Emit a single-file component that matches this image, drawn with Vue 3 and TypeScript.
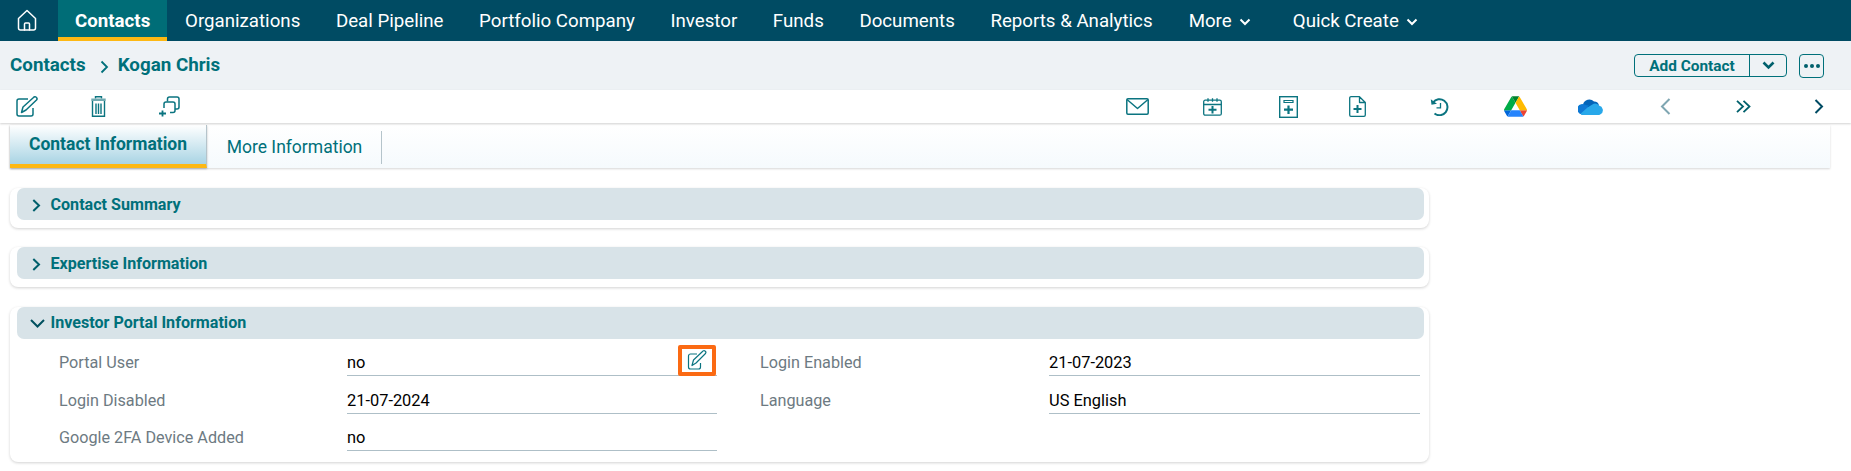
<script setup lang="ts">
const navItems: string[] = ['Organizations', 'Deal Pipeline', 'Portfolio Company', 'Investor', 'Funds', 'Documents', 'Reports & Analytics']
const collapsed: string[] = ['Contact Summary', 'Expertise Information']
</script>

<template>
  <div class="page">
    <nav class="nav">
      <a class="home" aria-label="Home">
        <svg width="20" height="22" viewBox="0 0 20 22" fill="none" stroke="#fff" stroke-width="1.5" stroke-linejoin="round" stroke-linecap="round">
          <path d="M1.5 9.5 10 1.5l8.500 8v9.500a2 2 0 0 1-2 2h-13a2 2 0 0 1-2-2z" />
          <path d="M7.500 21v-6a1 1 0 0 1 1-1h3a1 1 0 0 1 1 1v6" />
        </svg>
      </a>
      <a class="nav-item active">Contacts</a>
      <a v-for="item in navItems" :key="item" class="nav-item">{{ item }}</a>
      <a class="nav-item caret-item more">More
        <svg class="caret" width="12" height="8" viewBox="0 0 12 8" fill="none" stroke="#fff" stroke-width="2"><path d="M1.500 1.500 6 6l4.500-4.500" /></svg>
      </a>
      <a class="nav-item caret-item quick">Quick Create
        <svg class="caret" width="12" height="8" viewBox="0 0 12 8" fill="none" stroke="#fff" stroke-width="2"><path d="M1.500 1.500 6 6l4.500-4.500" /></svg>
      </a>
    </nav>

    <header class="crumbs">
      <span class="crumb">Contacts</span>
      <svg class="crumb-sep" width="9" height="14" viewBox="0 0 9 14" fill="none" stroke="#00707a" stroke-width="1.800"><path d="m1.500 1.500 5.500 5.500-5.500 5.500" /></svg>
      <span class="crumb">Kogan Chris</span>
      <div class="crumb-actions">
        <div class="split">
          <button class="split-main">Add Contact</button>
          <button class="split-caret" aria-label="Open">
            <svg width="13" height="9" viewBox="0 0 13 9" fill="none" stroke="#00606c" stroke-width="2.600"><path d="m1.500 1.500 5 5 5-5" /></svg>
          </button>
        </div>
        <button class="dots" aria-label="More actions"><i></i><i></i><i></i></button>
      </div>
    </header>

    <div class="toolbar">
      <svg class="t-edit" width="22" height="21" viewBox="0 0 22 21" fill="none" stroke="#0b7480" stroke-width="1.500" stroke-linejoin="round">
        <path d="M12 3H3a2 2 0 0 0-2 2v13a2 2 0 0 0 2 2h12a2 2 0 0 0 2-2v-6" />
        <path d="M5.500 16.500 7 11 17.500 1.500a1.600 1.600 0 0 1 3 2.500L10 14z" />
      </svg>
      <svg class="t-trash" width="15" height="21" viewBox="0 0 15 21" fill="none" stroke="#0b7480" stroke-width="1.400">
        <path d="M4.500 2.500V.7h6v1.800" />
        <path d="M.3 2.500h14.400v2.500H.3z" fill="#6fa9b0" stroke="none" />
        <path d="M1.500 5v15.300h12V5M5 7.500v10.500M7.500 7.500v10.500M10 7.500v10.500" />
      </svg>
      <svg class="t-copy" width="22" height="21" viewBox="0 0 22 21" fill="none" stroke="#0b7480" stroke-width="1.500">
        <path d="M9.500 5.500V3a2 2 0 0 1 2-2H19a2 2 0 0 1 2 2v8a2 2 0 0 1-2 2h-2" />
        <path d="M17 8a2 2 0 0 0-2-2H8a2 2 0 0 0-2 2v4M12 16.500h3a2 2 0 0 0 2-2V8" />
        <path d="M4.500 14.500v6M1 17.500h7" stroke-width="1.800" />
      </svg>
      <svg class="t-mail" width="23" height="17" viewBox="0 0 23 17" fill="none" stroke="#0b7480" stroke-width="1.500" stroke-linejoin="round">
        <rect x=".8" y=".8" width="21.400" height="15.400" rx="1.200" />
        <path d="m1 1.500 10.500 9 10.500-9" />
      </svg>
      <svg class="t-cal" width="19" height="18" viewBox="0 0 19 18" fill="none" stroke="#0b7480" stroke-width="1.300">
        <rect x=".7" y="2.200" width="17.600" height="15" rx="1.500" />
        <path d="M.7 6.500h17.600M5 .3v3.500M9.500.3v3.500M14 .3v3.500" />
        <path d="M9.500 8v7.500M5.500 11.700h8" stroke-width="2" />
      </svg>
      <svg class="t-doc" width="19" height="22" viewBox="0 0 19 22" fill="none" stroke="#0b7480" stroke-width="1.400">
        <rect x=".7" y=".7" width="17.600" height="20.600" />
        <path d="M5 4.500h9v2H5z" stroke-width="1.200" />
        <path d="M9.500 9.500v8.500M5 13.700h9" stroke-width="2.200" />
      </svg>
      <svg class="t-file" width="17" height="21" viewBox="0 0 17 21" fill="none" stroke="#0b7480" stroke-width="1.300" stroke-linejoin="round">
        <path d="M10.500.7H2A1.300 1.300 0 0 0 .7 2v17A1.300 1.300 0 0 0 2 20.300h13a1.300 1.300 0 0 0 1.300-1.300V6.500zM10.500.7v5.800h5.800" />
        <path d="M8.500 9v8M4.500 13h8" stroke-width="2" />
      </svg>
      <svg class="t-hist" width="19" height="18" viewBox="0 0 19 18" fill="none" stroke="#0b7480" stroke-width="2">
        <path d="M3 4.500A8 8 0 1 1 4.500 15.500" />
        <path d="M.8 1.200 1.500 6.800 7 5.800z" fill="#0b7480" stroke="none" />
        <path d="M10.500 5v4.800H6.500" stroke-width="1.300" />
      </svg>
      <svg class="t-drive" width="23" height="21" viewBox="0 0 87.300 78">
        <path d="m6.600 66.850 3.850 6.650c.8 1.400 1.950 2.500 3.300 3.300l13.750-23.800h-27.500c0 1.550.4 3.100 1.200 4.500z" fill="#0066da" />
        <path d="m43.650 25-13.750-23.800c-1.350.8-2.500 1.900-3.300 3.300l-25.400 44a9.060 9.060 0 0 0-1.200 4.500h27.500z" fill="#00ac47" />
        <path d="m73.550 76.800c1.350-.8 2.500-1.900 3.300-3.300l1.600-2.750 7.650-13.250c.8-1.400 1.200-2.950 1.200-4.500h-27.502l5.852 11.500z" fill="#ea4335" />
        <path d="m43.650 25 13.750-23.800c-1.350-.8-2.900-1.200-4.500-1.200h-18.500c-1.600 0-3.150.45-4.500 1.200z" fill="#00832d" />
        <path d="m59.800 53h-32.300l-13.750 23.800c1.350.8 2.900 1.200 4.500 1.200h50.800c1.600 0 3.150-.45 4.500-1.200z" fill="#2684fc" />
        <path d="m73.400 26.500-12.700-22c-.8-1.400-1.950-2.500-3.300-3.300l-13.750 23.800 16.150 28h27.450c0-1.550-.4-3.100-1.200-4.500z" fill="#ffba00" />
      </svg>
      <svg class="t-cloud" width="25" height="17" viewBox="0 0 25 17">
        <path d="M5 6.500A6.500 6.500 0 0 1 16 3.500a5 5 0 0 1 5 4l-9 4z" fill="#0364b8" />
        <path d="M5.500 6.300A4.500 4.500 0 0 0 3 16l8-8.500z" fill="#0078d4" />
        <path d="M2.500 15.900C1 15.200 0 13.500 0 11.500a5 5 0 0 1 5.500-5.200L12 10l4 7H4.500z" fill="#0f78d4" />
        <path d="M9.500 9.500 14 6.800a5.200 5.200 0 0 1 7 .8 4.700 4.700 0 0 1 1.800 8.500c-.5.500-1.200.9-2 .9H5a3 3 0 0 1-2.500-1.200z" fill="#28a8ea" />
      </svg>
      <svg class="t-prev" width="11" height="17" viewBox="0 0 11 17" fill="none" stroke="#7fa6b2" stroke-width="2"><path d="M9.500 1 2 8.500 9.500 16" /></svg>
      <svg class="t-double" width="15" height="13" viewBox="0 0 15 13" fill="none" stroke="#00606c" stroke-width="1.800"><path d="m1 .8 6 5.700-6 5.700M7.500.8l6 5.700-6 5.700" /></svg>
      <svg class="t-next" width="10" height="15" viewBox="0 0 10 15" fill="none" stroke="#004b63" stroke-width="2"><path d="m1.500 1 6.500 6.500L1.500 14" /></svg>
    </div>

    <div class="tabs">
      <a class="tab tab-active">Contact Information</a>
      <a class="tab tab-plain">More Information</a>
    </div>

    <main class="content">
      <section v-for="title in collapsed" :key="title" class="panel">
        <h2 class="panel-head">
          <svg class="chev-right" width="9" height="13" viewBox="0 0 9 13" fill="none" stroke="#00606c" stroke-width="2"><path d="m1.300 1 5.700 5.500-5.700 5.500" /></svg>
          <span>{{ title }}</span>
        </h2>
      </section>

      <section class="panel">
        <h2 class="panel-head">
          <svg class="chev-down" width="15" height="10" viewBox="0 0 15 10" fill="none" stroke="#00505f" stroke-width="2"><path d="m1 1 6.500 6.500 6.500-6.500" /></svg>
          <span>Investor Portal Information</span>
        </h2>
        <div class="form">
          <div class="label">Portal User</div>
          <div class="value">no
            <span class="edit-box">
              <svg width="20" height="21" viewBox="0 0 20 21" fill="none" stroke="#0b7480" stroke-width="1.200" stroke-linejoin="round">
                <path d="M10 4H3.500a2 2 0 0 0-2 2v11a2 2 0 0 0 2 2h8a2 2 0 0 0 2-2v-4" />
                <path d="M5 15.500 6.500 10 15.500 1.500a1.500 1.500 0 0 1 3 2L9 13z" />
              </svg>
            </span>
          </div>
          <div class="label second">Login Enabled</div>
          <div class="value">21-07-2023</div>
          <div class="label">Login Disabled</div>
          <div class="value">21-07-2024</div>
          <div class="label second">Language</div>
          <div class="value">US English</div>
          <div class="label">Google 2FA Device Added</div>
          <div class="value">no</div>
        </div>
      </section>
    </main>
  </div>
</template>

<style>
html, body { margin: 0; background: #fff; }
</style>

<style scoped>
.page { font-family: Roboto, "Noto Sans", sans-serif; width: 1851px; height: 471px; overflow: hidden; background: #fff; }

.nav { height: 41px; background: #004b63; display: flex; align-items: stretch; padding-left: 58px; position: relative; }
.home { position: absolute; left: 17px; top: 9px; line-height: 0; }
.nav-item { color: #fff; font-size: 18.700px; padding: 0 17.800px; white-space: nowrap; display: flex; align-items: center; box-sizing: border-box; }
.nav-item.active { background: #006d77; font-weight: 700; box-shadow: inset 0 -4px 0 #fdb813; padding: 0 17px; }
.caret { margin-left: 7px; margin-top: 2px; }
.more { margin-left: .500px; }
.quick { margin-left: 6.500px; }

.crumbs { height: 49px; background: #eef2f5; display: flex; align-items: center; padding: 0 27px 0 10px; box-sizing: border-box; }
.crumb { color: #00707a; font-weight: 700; font-size: 18.800px; margin-bottom: 2px; }
.crumb-sep { margin: 3px 9px 0 14px; }
.crumb-actions { margin-left: auto; display: flex; gap: 12px; align-items: center; }
.split { display: flex; height: 23px; width: 153px; border: 1px solid #00707a; border-radius: 4px; box-sizing: border-box; overflow: hidden; }
.split button { border: 0; background: transparent; font: 700 15.400px Roboto, sans-serif; color: #00707a; padding: 0; }
.split-main { width: 115px; border-right: 1px solid #00707a !important; }
.split-caret { flex: 1; display: flex; align-items: center; justify-content: center; }
.dots { width: 25px; height: 24px; border: 1px solid #00707a; border-radius: 4px; background: #eef2f5; display: flex; gap: 2px; align-items: center; justify-content: center; padding: 0; }
.dots i { width: 4px; height: 4px; border-radius: 50%; background: #00606c; }

.toolbar { height: 33px; display: flex; align-items: center; padding-left: 16px; box-shadow: 0 1px 2px rgba(0, 0, 0, .18); position: relative; background: #fff; }
.t-trash { margin-left: 53px; }
.t-copy { margin-left: 52px; }
.t-mail { margin-left: 946px; }
.t-cal { margin-left: 54px; }
.t-doc { margin-left: 57px; }
.t-file { margin-left: 51px; }
.t-hist { margin-left: 64px; }
.t-drive { margin-left: 55px; }
.t-cloud { margin-left: 51px; }
.t-prev { margin-left: 57px; }
.t-double { margin-left: 65px; }
.t-next { margin-left: 63px; }

.tabs { margin: 2px 21px 0 10px; height: 43px; display: flex; background: linear-gradient(#fff, #f5fafd); box-shadow: 0 1px 2px rgba(0, 0, 0, .16); }
.tab { font-size: 17.500px; color: #00707a; display: flex; align-items: center; box-sizing: border-box; white-space: nowrap; }
.tab-active { width: 197px; justify-content: center; font-weight: 700; background: linear-gradient(#fff, #a9d4e4); border-bottom: 4px solid #fdb813; border-right: 1px solid #b5c4cb; padding-bottom: 2px; box-shadow: 0 1px 2px rgba(0, 0, 0, .25); }
.tab-plain { width: 175px; justify-content: center; position: relative; }
.tab-plain::after { content: ""; position: absolute; right: 0; top: 6px; bottom: 4px; width: 1px; background: #b5c4cb; }

.content { padding: 20px 0 0 10px; width: 1429px; box-sizing: border-box; display: flex; flex-direction: column; gap: 19.800px; }
.panel { background: #fff; border-radius: 8px; box-shadow: 0 1px 3px rgba(0, 0, 0, .18); padding: 0 5px 7.500px 7px; }
.panel-head { margin: 0; height: 32px; background: #d8e3e8; border-radius: 7px; display: flex; align-items: center; font-size: 16.100px; font-weight: 700; color: #00707a; position: relative; padding-left: 33.500px; }
.chev-right { position: absolute; left: 15px; top: 10.500px; }
.chev-down { position: absolute; left: 13px; top: 12px; }

.form { display: grid; grid-template-columns: 288px 370px 332px 371px; grid-template-rows: 37px 38px 37px; padding: 0 0 4px 42px; }
.label { font-size: 16.200px; color: #6d7a82; display: flex; align-items: flex-end; line-height: 24px; padding-bottom: 1px; }
.label.second { padding-left: 43px; }
.value { font-size: 16.400px; color: #000; display: flex; align-items: flex-end; line-height: 24px; border-bottom: 1px solid #aebfc7; position: relative; }
.edit-box { position: absolute; right: 1.500px; top: 6.500px; width: 38px; height: 31px; border: 4px solid #fb6a13; border-radius: 2px; box-sizing: border-box; background: #fff; display: flex; align-items: center; justify-content: center; }
</style>
